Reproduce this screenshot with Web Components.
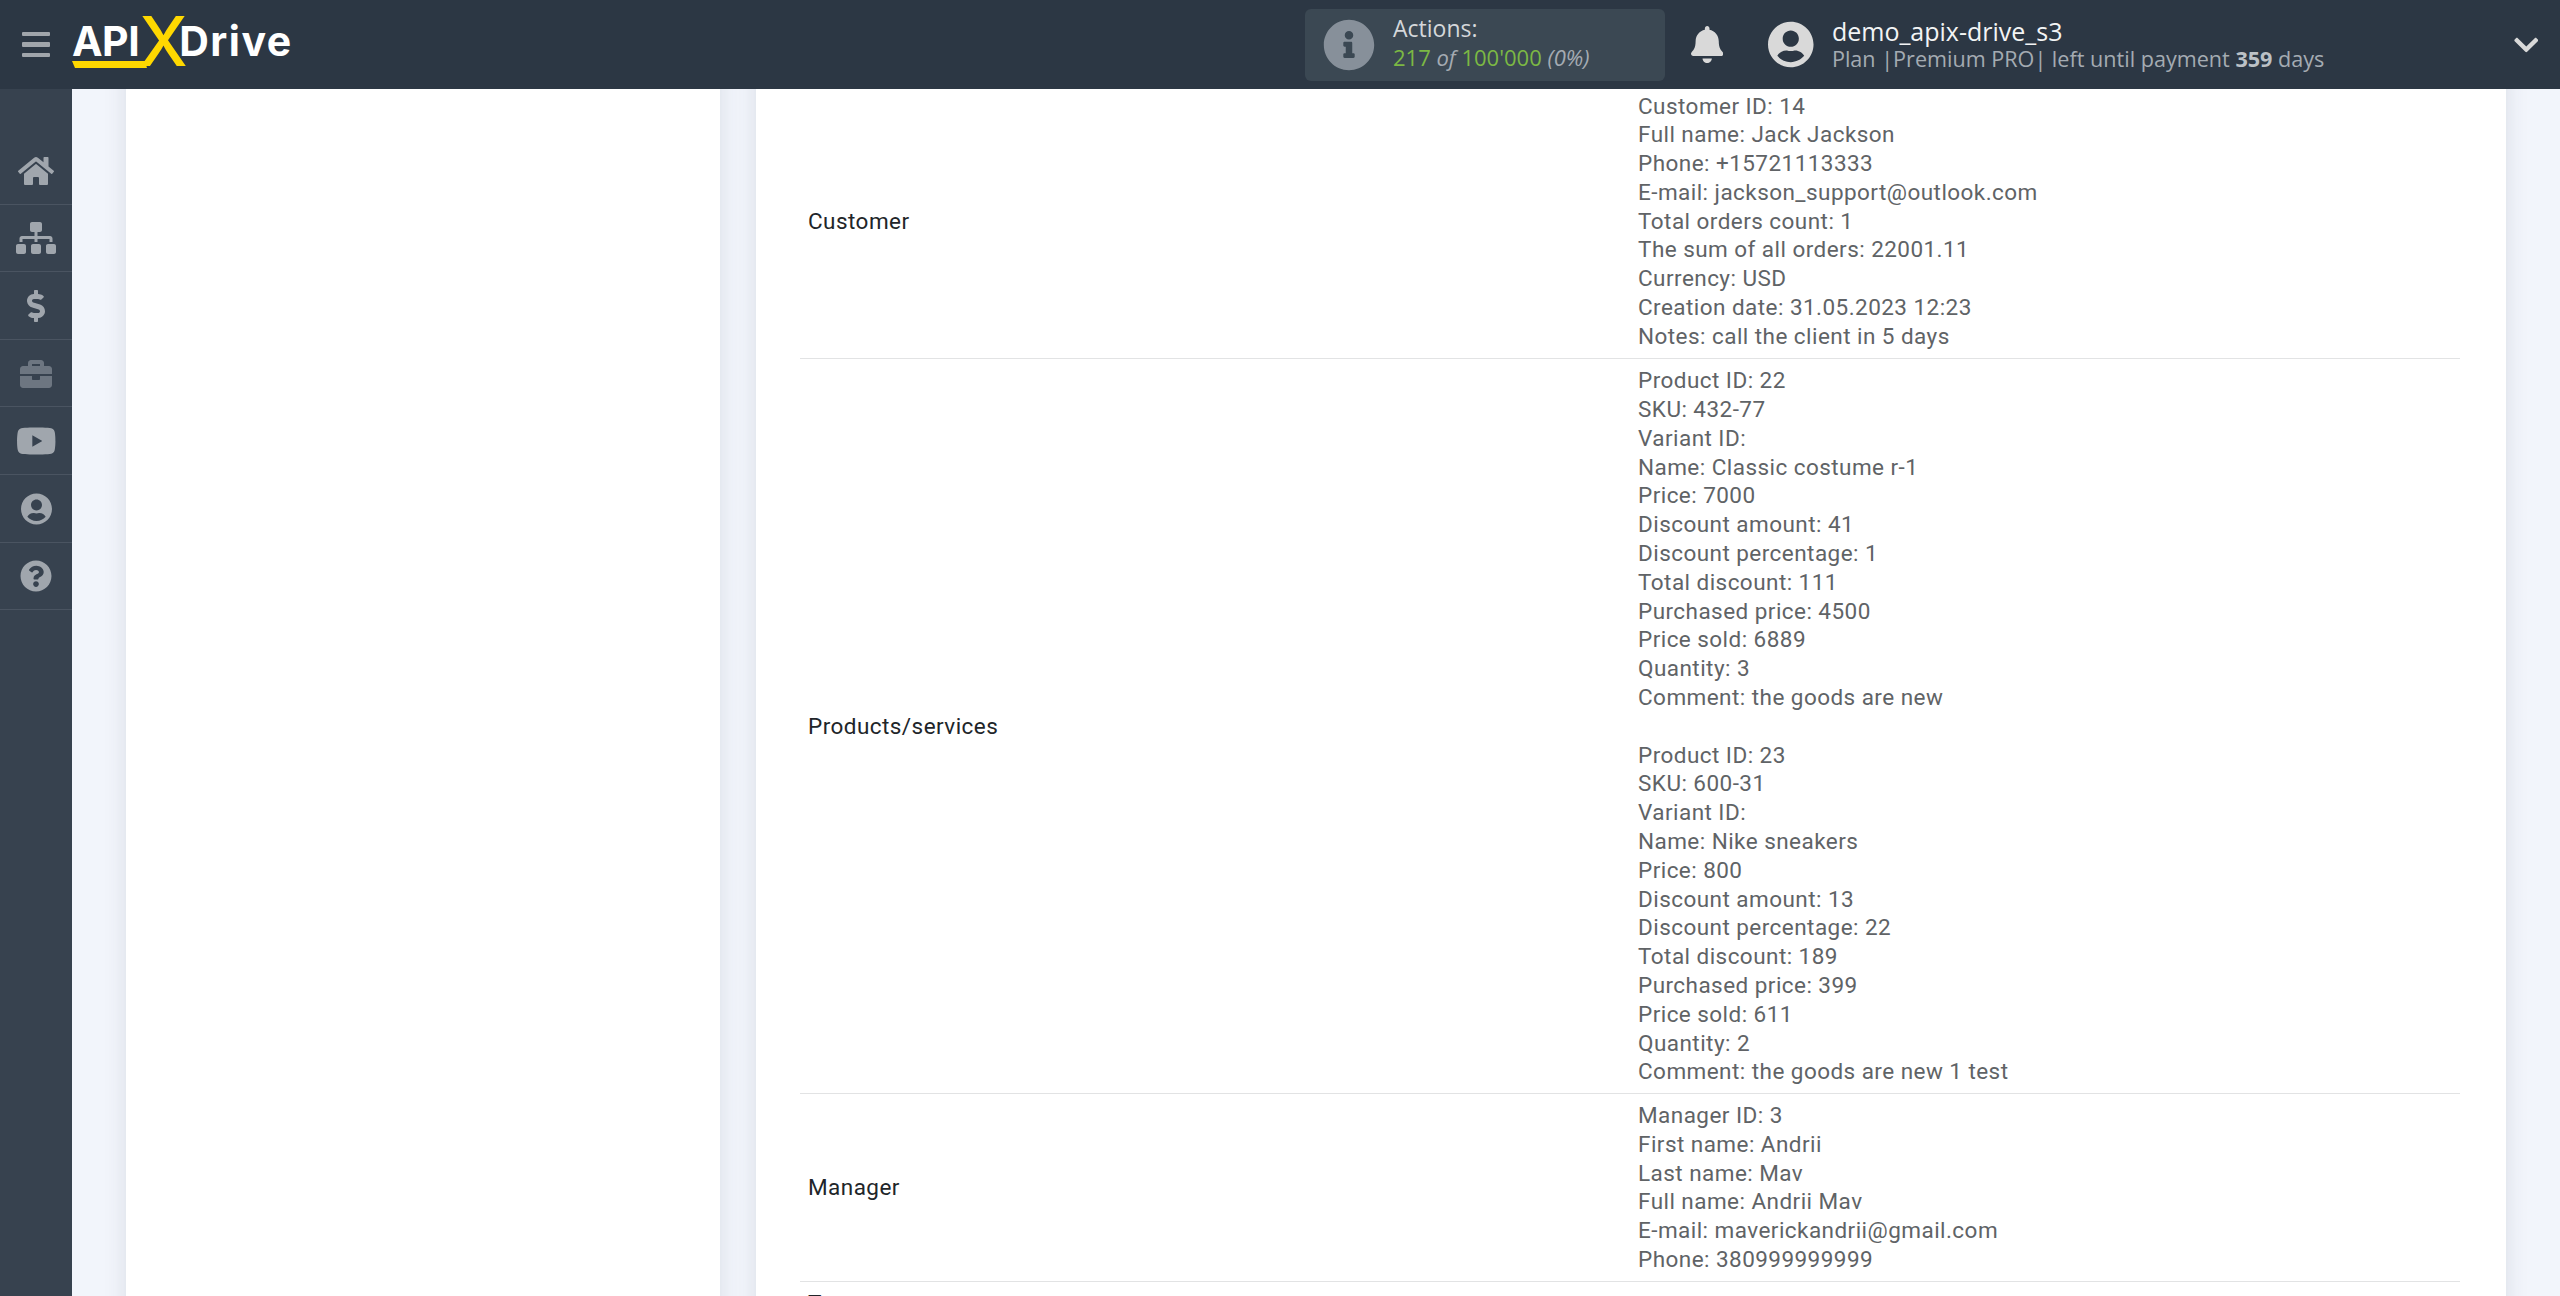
<!DOCTYPE html>
<html lang="en">
<head>
<meta charset="utf-8">
<title>ApiX-Drive</title>
<style>
  html, body { margin: 0; height: 100%; overflow: hidden; background: #f2f5fb; }
  body { display: flex; flex-direction: column; }
  apix-body { flex: 1; min-height: 0; }
</style>
</head>
<body>
<apix-header></apix-header>
<apix-body>
  <apix-sidebar slot="nav"></apix-sidebar>
  <data-panel slot="side"></data-panel>
  <data-panel slot="main" wide>
    <data-row first label="Customer">Customer ID: 14
Full name: Jack Jackson
Phone: +15721113333
E-mail: jackson_support@outlook.com
Total orders count: 1
The sum of all orders: 22001.11
Currency: USD
Creation date: 31.05.2023 12:23
Notes: call the client in 5 days</data-row>
    <data-row label="Products/services">Product ID: 22
SKU: 432-77
Variant ID:
Name: Classic costume r-1
Price: 7000
Discount amount: 41
Discount percentage: 1
Total discount: 111
Purchased price: 4500
Price sold: 6889
Quantity: 3
Comment: the goods are new

Product ID: 23
SKU: 600-31
Variant ID:
Name: Nike sneakers
Price: 800
Discount amount: 13
Discount percentage: 22
Total discount: 189
Purchased price: 399
Price sold: 611
Quantity: 2
Comment: the goods are new 1 test</data-row>
    <data-row label="Manager">Manager ID: 3
First name: Andrii
Last name: Mav
Full name: Andrii Mav
E-mail: maverickandrii@gmail.com
Phone: 380999999999</data-row>
    <data-row label="Tags"></data-row>
  </data-panel>
</apix-body>

<script>
(function () {
  const icons = {
    home: ["0 0 576 512", "M280.37 148.26L96 300.11V464a16 16 0 0 0 16 16l112.06-.29a16 16 0 0 0 15.92-16V368a16 16 0 0 1 16-16h64a16 16 0 0 1 16 16v95.64a16 16 0 0 0 16 16.05L464 480a16 16 0 0 0 16-16V300L295.67 148.26a12.19 12.19 0 0 0-15.3 0zM571.6 251.47L488 182.56V44.05a12 12 0 0 0-12-12h-56a12 12 0 0 0-12 12v72.61L318.47 43a48 48 0 0 0-61 0L4.34 251.47a12 12 0 0 0-1.6 16.9l25.5 31A12 12 0 0 0 45.15 301l235.22-193.74a12.19 12.19 0 0 1 15.3 0L530.9 301a12 12 0 0 0 16.9-1.6l25.5-31a12 12 0 0 0-1.7-16.93z"],
    sitemap: ["0 0 640 512", "M128 352H32c-17.67 0-32 14.33-32 32v96c0 17.67 14.33 32 32 32h96c17.67 0 32-14.33 32-32v-96c0-17.67-14.33-32-32-32zm-24-80h192v48h48v-48h192v48h48v-57.59c0-21.17-17.23-38.41-38.41-38.41H344v-64h40c17.67 0 32-14.33 32-32V32c0-17.67-14.33-32-32-32H256c-17.67 0-32 14.33-32 32v96c0 17.67 14.33 32 32 32h40v64H94.41C73.23 224 56 241.23 56 262.41V320h48v-48zm264 80h-96c-17.67 0-32 14.33-32 32v96c0 17.67 14.33 32 32 32h96c17.67 0 32-14.33 32-32v-96c0-17.67-14.33-32-32-32zm240 0h-96c-17.67 0-32 14.33-32 32v96c0 17.67 14.33 32 32 32h96c17.67 0 32-14.33 32-32v-96c0-17.67-14.33-32-32-32z"],
    dollar: ["0 0 288 512", "M209.2 233.4l-108-31.6C88.7 198.2 80 186.5 80 173.5c0-16.3 13.2-29.5 29.5-29.5h66.3c12.2 0 24.2 3.7 34.2 10.5 6.1 4.1 14.3 3.1 19.5-2l34.8-34c7.1-6.9 6.1-18.4-1.8-24.5C238 74.8 207.4 64.1 176 64V16c0-8.8-7.2-16-16-16h-32c-8.8 0-16 7.2-16 16v48h-2.5C45.8 64-5.4 118.7.5 183.6c4.2 46.1 39.4 83.6 83.8 96.6l102.5 30c12.5 3.7 21.2 15.3 21.2 28.3 0 16.3-13.2 29.5-29.5 29.5h-66.3C100 368 88 364.3 78 357.5c-6.1-4.1-14.3-3.1-19.5 2l-34.8 34c-7.1 6.9-6.1 18.4 1.8 24.5 24.5 19.2 55.1 29.9 86.5 30v48c0 8.8 7.2 16 16 16h32c8.8 0 16-7.2 16-16v-48.2c46.6-.9 90.3-28.6 105.7-72.7 21.5-61.6-14.6-124.8-72.5-141.7z"],
    briefcase: ["0 0 512 512", "M320 336c0 8.84-7.16 16-16 16h-96c-8.84 0-16-7.16-16-16v-48H0v144c0 25.6 22.4 48 48 48h416c25.6 0 48-22.4 48-48V288H320v48zm144-208h-80V80c0-25.6-22.4-48-48-48H176c-25.6 0-48 22.4-48 48v48H48c-25.6 0-48 22.4-48 48v80h512v-80c0-25.6-22.4-48-48-48zm-144 0H192V96h128v32z"],
    youtube: ["0 0 576 512", "M549.655 124.083c-6.281-23.65-24.787-42.276-48.284-48.597C458.781 64 288 64 288 64S117.22 64 74.629 75.486c-23.497 6.322-42.003 24.947-48.284 48.597-11.412 42.867-11.412 132.305-11.412 132.305s0 89.438 11.412 132.305c6.281 23.65 24.787 41.5 48.284 47.821C117.22 448 288 448 288 448s170.78 0 213.371-11.486c23.497-6.321 42.003-24.171 48.284-47.821 11.412-42.867 11.412-132.305 11.412-132.305s0-89.438-11.412-132.305zm-317.51 213.508V175.185l142.739 81.205-142.739 81.201z"],
    user: ["0 0 496 512", "M248 8C111 8 0 119 0 256s111 248 248 248 248-111 248-248S385 8 248 8zm0 96c48.6 0 88 39.4 88 88s-39.4 88-88 88-88-39.4-88-88 39.4-88 88-88zm0 344c-58.7 0-111.3-26.6-146.5-68.2 18.8-35.4 55.6-59.8 98.5-59.8 2.4 0 4.8.4 7.1 1.1 13 4.2 26.6 6.9 40.9 6.9 14.3 0 28-2.7 40.9-6.9 2.3-.7 4.7-1.1 7.1-1.1 42.9 0 79.7 24.4 98.5 59.8C359.3 421.4 306.7 448 248 448z"],
    question: ["0 0 512 512", "M504 256c0 136.997-111.043 248-248 248S8 392.997 8 256C8 119.083 119.043 8 256 8s248 111.083 248 248zM262.655 90c-54.497 0-89.255 22.957-116.549 63.758-3.536 5.286-2.353 12.415 2.715 16.258l34.699 26.31c5.205 3.947 12.621 3.008 16.665-2.122 17.864-22.658 30.113-35.797 57.303-35.797 20.429 0 45.698 13.148 45.698 32.958 0 14.976-12.363 22.667-32.534 33.976C247.128 238.528 216 254.941 216 296v4c0 6.627 5.373 12 12 12h56c6.627 0 12-5.373 12-12v-1.333c0-28.462 83.186-29.647 83.186-106.667 0-58.002-60.165-102-116.531-102zM256 338c-25.365 0-46 20.635-46 46 0 25.364 20.635 46 46 46s46-20.636 46-46c0-25.365-20.635-46-46-46z"],
    info: ["0 0 512 512", "M256 8C119.043 8 8 119.083 8 256c0 136.997 111.043 248 248 248s248-111.003 248-248C504 119.083 392.957 8 256 8zm0 110c23.196 0 42 18.804 42 42s-18.804 42-42 42-42-18.804-42-42 18.804-42 42-42zm56 254c0 6.627-5.373 12-12 12h-88c-6.627 0-12-5.373-12-12v-24c0-6.627 5.373-12 12-12h12v-64h-12c-6.627 0-12-5.373-12-12v-24c0-6.627 5.373-12 12-12h64c6.627 0 12 5.373 12 12v100h12c6.627 0 12 5.373 12 12v24z"],
    bell: ["0 0 448 512", "M224 512c35.32 0 63.97-28.65 63.97-64H160.03c0 35.35 28.65 64 63.97 64zm215.39-149.71c-19.32-20.76-55.47-51.99-55.47-154.29 0-77.7-54.48-139.9-127.94-155.16V32c0-17.67-14.32-32-31.98-32s-31.98 14.33-31.98 32v20.84C118.56 68.1 64.08 130.3 64.08 208c0 102.3-36.15 133.53-55.47 154.29-6 6.45-8.66 14.16-8.61 21.71.11 16.4 12.98 32 32.1 32h383.8c19.12 0 32-15.6 32.1-32 .05-7.55-2.61-15.27-8.61-21.71z"],
    chevron: ["0 0 448 512", "M207.029 381.476L12.686 187.132c-9.373-9.373-9.373-24.569 0-33.941l22.667-22.667c9.357-9.357 24.522-9.375 33.901-.04L224 284.505l154.745-154.021c9.379-9.335 24.544-9.317 33.901.04l22.667 22.667c9.373 9.373 9.373 24.569 0 33.941L240.971 381.476c-9.373 9.372-24.569 9.372-33.942 0z"],
  };

  function svgIcon(name, size, color) {
    const [box, d] = icons[name];
    return `<svg xmlns="http://www.w3.org/2000/svg" viewBox="${box}" height="${size}" fill="${color}" style="display:block"><path d="${d}"/></svg>`;
  }

  class ApixHeader extends HTMLElement {
    constructor() {
      super();
      const shadow = this.attachShadow({ mode: "open" });
      shadow.innerHTML = `
        <style>
          :host {
            display: flex;
            align-items: center;
            height: 89px;
            flex: none;
            background: #2c3744;
            color: #fff;
            font-family: "Open Sans", "Noto Sans", sans-serif;
            position: relative;
            z-index: 2;
          }
          .burger {
            width: 28px;
            margin-left: 22px;
            display: flex;
            flex-direction: column;
            gap: 6px;
          }
          .burger i { display: block; height: 4.5px; background: #a0a5ab; border-radius: 1px; }
          .logo {
            position: relative;
            margin-left: 22px;
            display: flex;
            align-items: center;
            font-family: Inter, "Open Sans", sans-serif;
            font-weight: 700;
            font-size: 41px;
            letter-spacing: -0.5px;
            line-height: 50px;
            height: 60px;
            width: 240px;
            transform: translateY(-4px);
          }
          .logo .drive { letter-spacing: 1.5px; margin-left: -1px; }
          .logo .x {
            color: #ffd800;
            font-size: 69px;
            font-weight: 500;
            line-height: 50px;
            width: 41px;
            text-align: center;
          }
          .logo svg { position: absolute; left: 0; top: 50px; }
          .actions {
            margin-left: 993px;
            width: 360px;
            height: 72px;
            box-sizing: border-box;
            background: #3b4853;
            border-radius: 6px;
            display: flex;
            align-items: center;
            padding-left: 18px;
            gap: 18px;
          }
          .actions .txt { font-size: 22px; line-height: 29px; color: #d4d7da; white-space: nowrap; }
          .actions .txt div:first-child { font-size: 23px; margin-top: -4px; }
          .green { color: #7cb844; }
          .muted { color: #a4abb2; font-style: italic; }
          .bell { margin-left: 26px; }
          .avatar { margin-left: 45px; }
          .user { margin-left: 18px; white-space: nowrap; line-height: 28px; }
          .user .name { font-size: 25px; color: #f3f4f5; }
          .user .plan { font-size: 21.6px; color: #a4abb2; }
          .user b { font-weight: 700; color: #bcc1c6; }
          .chev { margin-left: auto; margin-right: 22px; }
        </style>
        <div class="burger"><i></i><i></i><i></i></div>
        <div class="logo">
          <span>API</span><span class="x">X</span><span class="drive">Drive</span>
          <svg width="76" height="9" viewBox="0 0 76 9"><polygon points="0,0 73,0 75,7 3,7" fill="#ffd800"/></svg>
        </div>
        <div class="actions">
          ${svgIcon("info", 52, "#87909a")}
          <div class="txt">
            <div>Actions:</div>
            <div><span class="green">217</span> <span class="muted">of</span> <span class="green">100'000</span> <span class="muted">(0%)</span></div>
          </div>
        </div>
        <div class="bell">${svgIcon("bell", 37, "#d9d9d9")}</div>
        <div class="avatar">${svgIcon("user", 47, "#d9d9d9")}</div>
        <div class="user">
          <div class="name">demo_apix-drive_s3</div>
          <div class="plan">Plan |Premium PRO| left until payment <b>359</b> days</div>
        </div>
        <div class="chev">${svgIcon("chevron", 28, "#d9d9d9")}</div>
      `;
    }
  }

  class ApixSidebar extends HTMLElement {
    constructor() {
      super();
      const shadow = this.attachShadow({ mode: "open" });
      const items = [
        ["home", 32, "#a0a6ad"],
        ["sitemap", 32, "#a0a6ad"],
        ["dollar", 32, "#a0a6ad"],
        ["briefcase", 32, "#6d7681"],
        ["youtube", 36, "#a0a6ad"],
        ["user", 32, "#a0a6ad"],
        ["question", 32, "#a0a6ad"],
      ];
      shadow.innerHTML = `
        <style>
          :host {
            display: block;
            width: 72px;
            height: 100%;
            box-sizing: border-box;
            background: #37424f;
            padding-top: 48px;
          }
          .item {
            height: 67.6px;
            box-sizing: border-box;
            border-bottom: 1px solid #4a5461;
            padding-top: 1px;
            display: flex;
            align-items: center;
            justify-content: center;
          }
        </style>
        ${items
          .map(([name, size, color]) => `<div class="item">${svgIcon(name, size, color)}</div>`)
          .join("")}
      `;
    }
  }

  class ApixBody extends HTMLElement {
    constructor() {
      super();
      const shadow = this.attachShadow({ mode: "open" });
      shadow.innerHTML = `
        <style>
          :host {
            display: grid;
            grid-template-columns: 72px 54px 594px 36px 1750px;
            overflow: hidden;
          }
          .nav { grid-column: 1; }
          .side { grid-column: 3; }
          .main { grid-column: 5; }
          .side, .main { display: block; margin: -40px 0; }
          .nav { display: block; position: relative; z-index: 1; }
        </style>
        <div class="nav"><slot name="nav"></slot></div>
        <div class="side"><slot name="side"></slot></div>
        <div class="main"><slot name="main"></slot></div>
      `;
    }
  }

  class DataPanel extends HTMLElement {
    constructor() {
      super();
      const shadow = this.attachShadow({ mode: "open" });
      shadow.innerHTML = `
        <style>
          :host {
            display: block;
            height: 100%;
            box-sizing: border-box;
            background: #fff;
            box-shadow: 0 0 22px rgba(50, 60, 85, 0.12);
            padding-top: 40px;
            min-height: 1290px;
          }
          :host([wide]) { padding: 40px 46px 0 44px; }
        </style>
        <slot></slot>
      `;
    }
  }

  class DataRow extends HTMLElement {
    constructor() {
      super();
      const shadow = this.attachShadow({ mode: "open" });
      shadow.innerHTML = `
        <style>
          :host {
            display: grid;
            grid-template-columns: 1fr 1fr;
            padding: 7px 0;
            border-bottom: 1px solid #e2e3e4;
            font-family: Roboto, "Liberation Sans", sans-serif;
            font-size: 22.5px;
            letter-spacing: 0.45px;
            line-height: 28.8px;
          }
          :host([first]) { padding-top: 2.5px; padding-bottom: 7.5px; }
          .label { align-self: center; padding-left: 8px; color: #212529; }
          .value { padding-left: 8px; color: #606366; white-space: pre-line; min-height: 28.8px; }
        </style>
        <div class="label"></div>
        <div class="value"><slot></slot></div>
      `;
      shadow.querySelector(".label").textContent = this.getAttribute("label") || "";
    }
  }

  customElements.define("apix-header", ApixHeader);
  customElements.define("apix-sidebar", ApixSidebar);
  customElements.define("apix-body", ApixBody);
  customElements.define("data-panel", DataPanel);
  customElements.define("data-row", DataRow);
})();
</script>
</body>
</html>
